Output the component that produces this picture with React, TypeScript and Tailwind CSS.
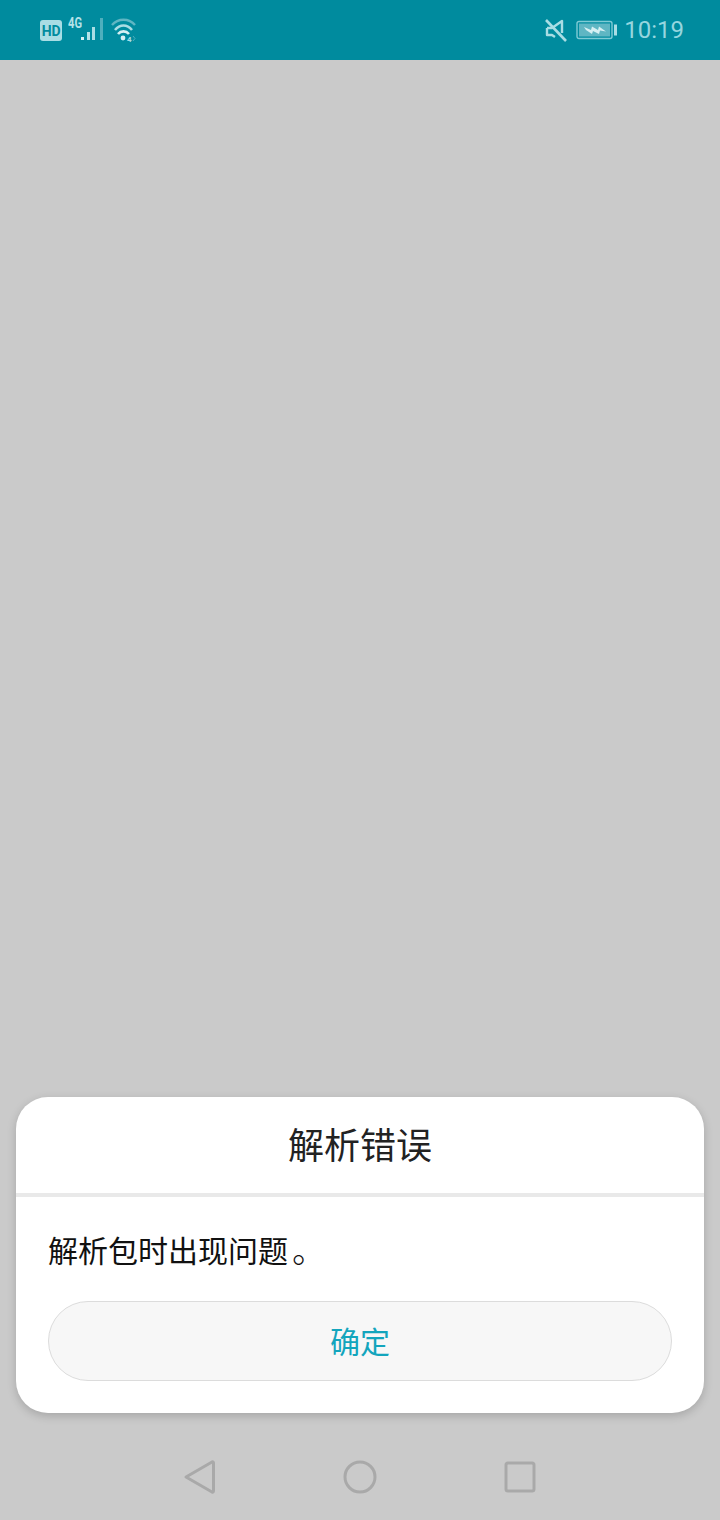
import React from 'react';

// Icons of the status bar, drawn by hand
const StatusLeft = () => (
    <div className="flex items-center">
        <div className="w-[22px] h-[21px] rounded-[3px] bg-[#a9dde4] flex items-center justify-center mt-[1px]">
            <span className="text-[14px] font-bold leading-none tracking-[-0.3px] text-[#008b9e] font-['Roboto',sans-serif]">HD</span>
        </div>
        <svg width="40" height="28" viewBox="0 0 40 28" className="ml-[6px]">
            <text x="0" y="12" fontSize="14" fontWeight="700" fill="#b5e2e8" fontFamily="Roboto, sans-serif" textLength="14" lengthAdjust="spacingAndGlyphs">4G</text>
            <rect x="13" y="21" width="3" height="3" fill="#d6f0f3" />
            <rect x="19" y="16" width="3" height="8" fill="#b5e2e8" />
            <rect x="24" y="11" width="3" height="13" fill="#a9dde4" />
            <rect x="32" y="2" width="3" height="22" fill="#4fafbd" />
        </svg>
        <svg width="28" height="26" viewBox="0 0 28 26" className="ml-[2px]">
            <path d="M2 8 C8 1 19 1 25 8" fill="none" stroke="#5fb6c3" strokeWidth="2.4" />
            <path d="M5 13 C10 7 17 7 22 13" fill="none" stroke="#a9dde4" strokeWidth="2.6" />
            <path d="M8 17 C11 13.5 16 13.5 19 17" fill="none" stroke="#d6f0f3" strokeWidth="2.6" />
            <circle cx="13" cy="21" r="2.4" fill="#d6f0f3" />
            <text x="17" y="25" fontSize="8" fontWeight="700" fill="#a9dde4" fontFamily="Roboto, sans-serif">4</text>
            <path d="M23 19 L25 21.5 L23 24" fill="none" stroke="#4fafbd" strokeWidth="1" />
        </svg>
    </div>
);

const StatusRight = () => (
    <div className="flex items-center">
        <svg width="24" height="26" viewBox="0 0 24 26">
            <path d="M3 11 H8 L18 4 V16 M3 11 V18 H8 L11 20" fill="none" stroke="#a9dde4" strokeWidth="2.4" strokeLinejoin="round" />
            <path d="M2 3 L22 24" stroke="#a9dde4" strokeWidth="2.6" />
        </svg>
        <svg width="42" height="20" viewBox="0 0 42 20" className="ml-[8px]">
            <rect x="1" y="1.5" width="35" height="17" rx="2" fill="none" stroke="#7fcbd5" strokeWidth="1.4" />
            <rect x="3" y="3.5" width="31" height="13" fill="#5fb6c3" />
            <path d="M8 7 L15 10 L16 6.5 L22 10 L23 6.5 L30 11.5 L24 10.5 L23 14 L17 11 L16 14 L10 10 Z" fill="#d6f0f3" />
            <rect x="38" y="4.5" width="3" height="11" fill="#a9dde4" />
        </svg>
        <span className="ml-[6px] text-[24px] leading-none text-[#96d6df] font-['Roboto',sans-serif]">10:19</span>
    </div>
);

export default function App() {
    return (
        <div className="w-[720px] h-[1520px] flex flex-col bg-[#cacaca] font-['Noto_Sans_CJK_SC','Noto_Sans',sans-serif]">
            <div className="h-[60px] shrink-0 bg-[#008b9e] pl-[40px] pr-[36px] flex items-center justify-between">
                <StatusLeft />
                <StatusRight />
            </div>

            <div className="flex-1 flex flex-col justify-end px-4">
                <div className="bg-white rounded-[32px] shadow-[0_3px_10px_rgba(0,0,0,0.18)] pb-[32px]">
                    <div className="h-[96px] pb-[4px] flex items-center justify-center text-[36px] leading-none text-[#222222]">
                        解析错误
                    </div>
                    <div className="h-[4px] bg-[#e9e9e9]" />
                    <div className="px-[32px] h-[104px] pb-[1px] flex items-center text-[30px] leading-none text-[#111111]">
                        <span>解析包时出现问题</span>
                        <span className="ml-[4px] text-[34px] leading-none font-light">。</span>
                    </div>
                    <div className="mx-[32px] h-[80px] pb-[2px] rounded-full bg-[#f7f7f7] border border-[#dcdcdc] flex items-center justify-center text-[30px] leading-none text-[#13a5bd]">
                        确定
                    </div>
                </div>
            </div>

            <div className="h-[107px] shrink-0 flex items-center justify-center gap-[112px] pt-[20px]">
                <svg width="48" height="48" viewBox="0 0 48 48" className="block">
                    <path d="M10 24 L36 9 Q37.5 8.5 37.5 10 V38 Q37.5 39.5 36 39 Z" fill="none" stroke="#a9a9a9" strokeWidth="3" strokeLinejoin="round" />
                </svg>
                <svg width="48" height="48" viewBox="0 0 48 48" className="block">
                    <circle cx="24" cy="24" r="15" fill="none" stroke="#a9a9a9" strokeWidth="3" />
                </svg>
                <svg width="48" height="48" viewBox="0 0 48 48" className="block">
                    <rect x="10" y="10" width="28" height="28" rx="2" fill="none" stroke="#a9a9a9" strokeWidth="3" />
                </svg>
            </div>
        </div>
    );
}
